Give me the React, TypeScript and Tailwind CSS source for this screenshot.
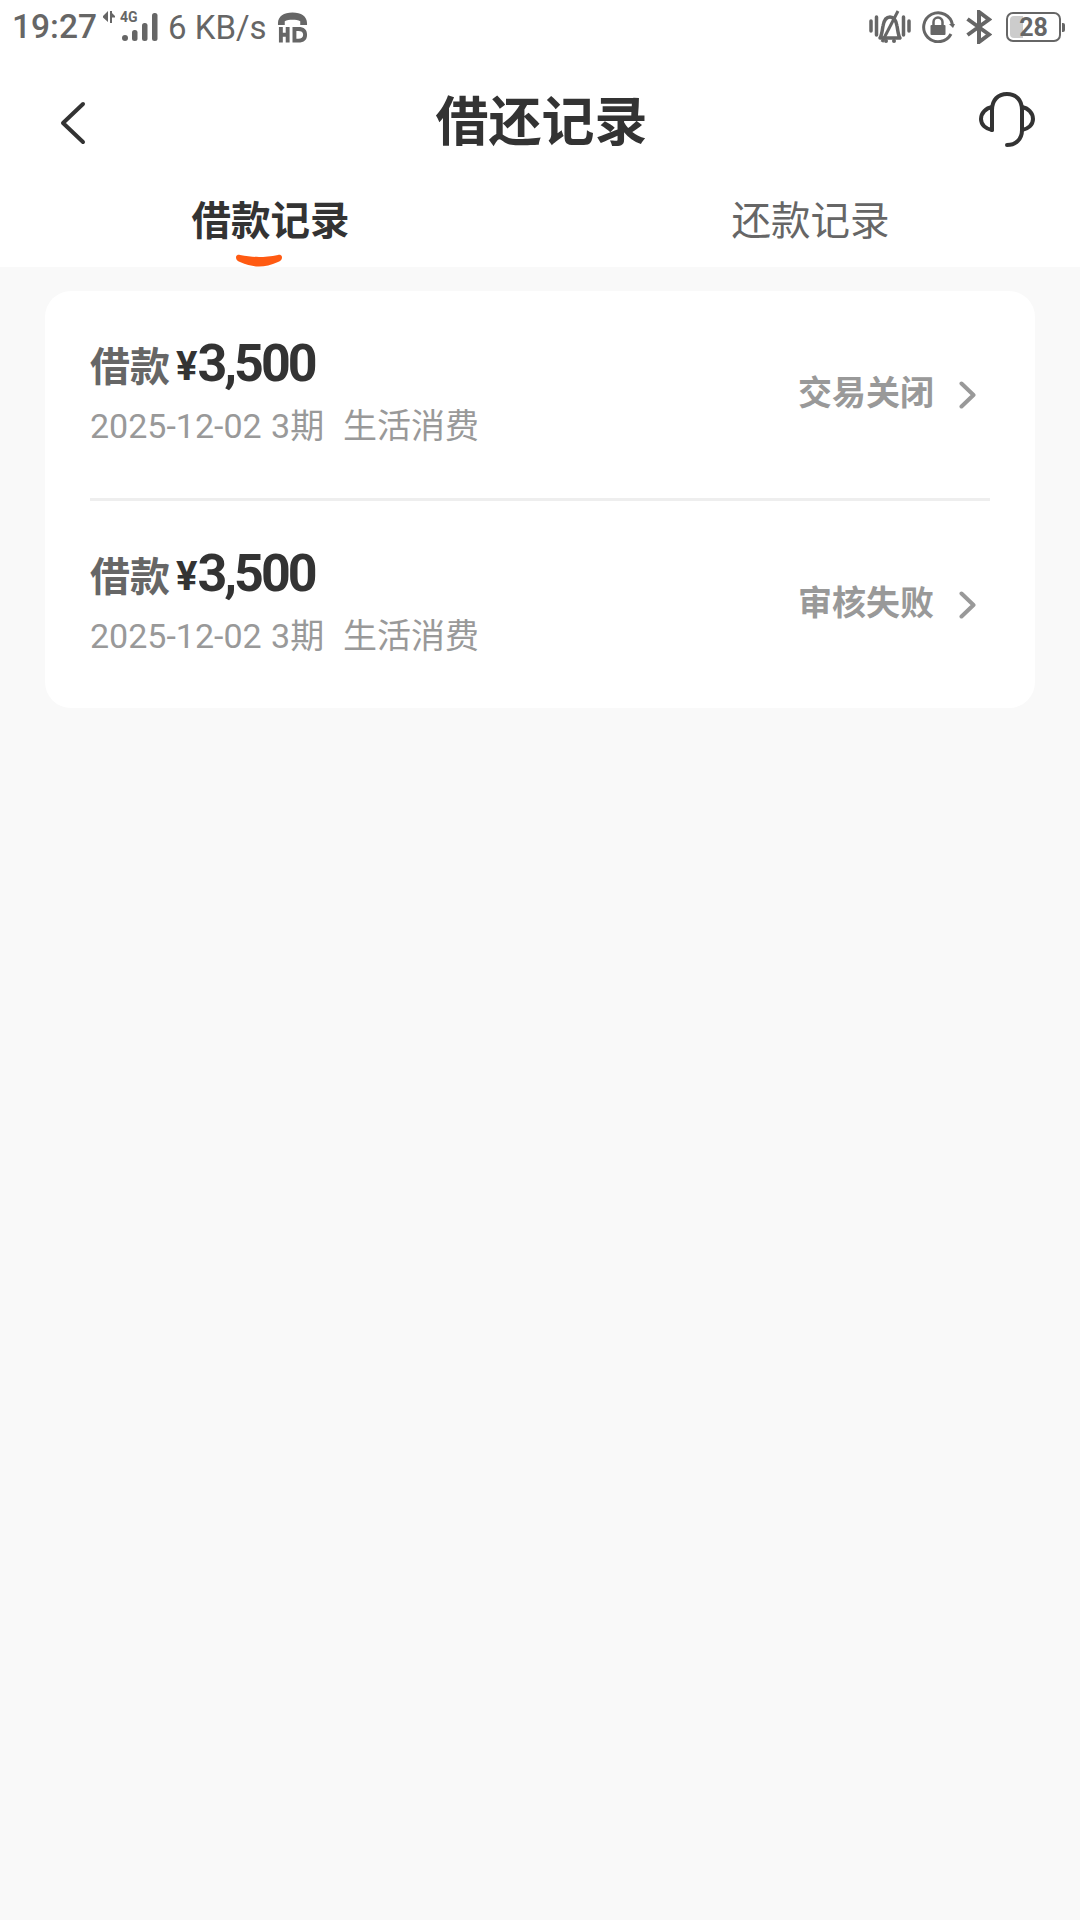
const cjk = "font-['Roboto','Noto_Sans_CJK_SC',sans-serif]";

function StatusBar() {
  return (
    <div className="flex h-[54px] items-center justify-between pl-[12px] pr-[15px] text-[#666666]">
      <div className="flex items-center">
        <span className="w-[88px] text-[33.500px] font-medium leading-none">19:27</span>
        <svg width="60" height="34" viewBox="0 0 60 34" fill="#666666">
          <path d="M8 1v11L3 7.500V6zM10 1l5 5v1.500l-5 0z" />
          <path d="M10 1h2v12h-2z" />
          <text x="20" y="12" fontSize="14" fontWeight="700" fontFamily="Roboto">4G</text>
          <rect x="22" y="25" width="6" height="6" rx="3" />
          <rect x="32" y="20" width="5.500" height="11" rx="2.500" />
          <rect x="42" y="13" width="5.500" height="18" rx="2.500" />
          <rect x="52" y="3" width="5.500" height="28" rx="2.500" />
        </svg>
        <span className="ml-[8px] text-[33px] leading-none">6 KB/s</span>
        <svg className="ml-[10px]" width="31" height="32" viewBox="0 0 32 32" fill="#666666">
          <path d="M1 12C1 5 7 1 16 1s15 4 15 11v2h-7v-4c-2-1-5-1.500-8-1.500s-6 .5-8 1.500v4H1z" />
          <path d="M2 16h4v6h3v-6h4v16H9v-6H6v6H2zM16 16h6c6 0 9 2.500 9 8s-3 8-9 8h-6zm4 4v8h2c3 0 5-1 5-4s-2-4-5-4z" />
        </svg>
      </div>
      <div className="flex items-center">
        <svg width="42" height="34" viewBox="0 0 42 34" fill="none" stroke="#666666" strokeWidth="3.500">
          <path d="M2 11v10M7.500 7v18M34.500 7v18M40 11v10" strokeLinecap="round" />
          <path d="M11 28c2-3 2-7 3-12 1-6 3-9 7-9s6 3 7 9c1 5 1 9 3 12z" strokeLinejoin="round" />
          <path d="M13 32L29 1" strokeWidth="3" />
          <circle cx="17" cy="31" r="2" fill="#666666" stroke="none" />
          <circle cx="25" cy="31" r="2" fill="#666666" stroke="none" />
        </svg>
        <svg className="ml-[11px]" width="33" height="32" viewBox="0 0 33 32" fill="none" stroke="#666666" strokeWidth="3">
          <path d="M29 23A14.500 14.500 0 1 1 30.500 14" />
          <path d="M27 13l4 4 2-4z" fill="#666666" stroke="none" />
          <path d="M11.500 14v-3a4.500 4.500 0 0 1 9 0V14" strokeWidth="2.500" />
          <rect x="8.500" y="14" width="15" height="10" rx="1" fill="#666666" stroke="none" />
        </svg>
        <svg className="ml-[11px]" width="26" height="34" viewBox="0 0 26 34" fill="none" stroke="#666666" strokeWidth="4">
          <path d="M1.500 9L23 24.500 13 32V2L23 9.500 1.500 25" strokeLinejoin="miter" />
        </svg>
        <div className="relative ml-[14px] mr-[4px] flex h-[30px] w-[55px] items-center justify-center rounded-[7px] border-2 border-[#666666]">
          <div className="absolute bottom-[2px] left-[2px] top-[2px] w-[13px] rounded-l-[4px] bg-[#cccccc]" />
          <span className="relative text-[25px] font-bold leading-none">28</span>
          <div className="absolute -right-[6px] h-[9px] w-[3px] rounded-r-[2px] bg-[#666666]" />
        </div>
      </div>
    </div>
  );
}

function NavBar() {
  return (
    <div className="mt-[23px] flex h-[92px] items-center justify-between pl-[60px] pr-[45px]">
      <svg width="26" height="44" viewBox="0 0 26 44" fill="none" stroke="#333333" strokeWidth="4" strokeLinecap="round" strokeLinejoin="round">
        <path d="M23 3L3 22l20 19" />
      </svg>
      <h1 className="ml-[18px] text-[53px] font-bold leading-none text-[#333333]">借还记录</h1>
      <svg className="-translate-y-[3px]" width="56" height="56" viewBox="0 0 56 56" fill="none" stroke="#333333" strokeWidth="4" strokeLinecap="round">
        <path d="M13 38V18C13 8 19 2 28 2s15 6 15 16v20c0 9-6 15-15 15" />
        <path d="M13 15C7 16 2 21 2 27s5 10 11 11" />
        <path d="M43 15c6 1 11 6 11 12s-5 10-11 11" />
      </svg>
    </div>
  );
}

function Tabs() {
  return (
    <div className="flex h-[98px] bg-white">
      <div className="relative flex w-[541px] justify-center pt-[28px]">
        <span className="text-[39.500px] font-bold leading-[50px] text-[#333333]">借款记录</span>
        <svg className="absolute left-[236px] top-[85px]" width="46" height="13" viewBox="0 0 46 12" fill="#ff5a12">
          <path d="M0 3c0-2 1.500-3 4-2.500C11 2 18 2.500 23 2.500S35 2 42 .5c2.500-.5 4 .5 4 2.500 0 2-1.500 3.500-4 4.500C35 10.500 29 12 23 12S11 10.500 4 7.500C1.500 6.500 0 5 0 3z" />
        </svg>
      </div>
      <div className="flex w-[539px] justify-center pt-[28px]">
        <span className="text-[39.500px] leading-[50px] text-[#666666]">还款记录</span>
      </div>
    </div>
  );
}

function Record({ status }: { status: string }) {
  return (
    <div className="flex h-[207px] items-center justify-between pb-[4px]">
      <div>
        <div className="flex h-[54px] items-end">
          <span className="text-[40px] font-bold leading-[48px] text-[#666666]">借款</span>
          <span className="ml-[6px] text-[40px] font-bold leading-[50px] text-[#333333]">¥</span>
          <span className="text-[52px] font-bold leading-[56px] tracking-[-3px] text-[#333333]">3,500</span>
        </div>
        <div className="mt-[12px] whitespace-pre text-[34px] leading-[44px] text-[#999999] [word-spacing:1px]">2025-12-02 3期  生活消费</div>
      </div>
      <div className="flex items-center pr-[14px]">
        <span className="-translate-x-[1px] text-[34px] font-bold leading-none text-[#999999]">{status}</span>
        <svg className="ml-[24px] translate-y-[2px]" width="17" height="28" viewBox="0 0 17 28" fill="none" stroke="#999999" strokeWidth="4" strokeLinecap="round" strokeLinejoin="round">
          <path d="M2.500 2.500L14.500 14 2.500 25.500" />
        </svg>
      </div>
    </div>
  );
}

export default function App() {
  return (
    <div className={`flex min-h-[1920px] w-[1080px] flex-col bg-[#f9f9f9] ${cjk}`}>
      <div className="bg-white">
        <StatusBar />
        <NavBar />
      </div>
      <Tabs />
      <div className="mx-[45px] mt-[24px] rounded-[26px] bg-white px-[45px]">
        <Record status="交易关闭" />
        <div className="h-[3px] bg-[#eeeeee]" />
        <Record status="审核失败" />
      </div>
    </div>
  );
}
